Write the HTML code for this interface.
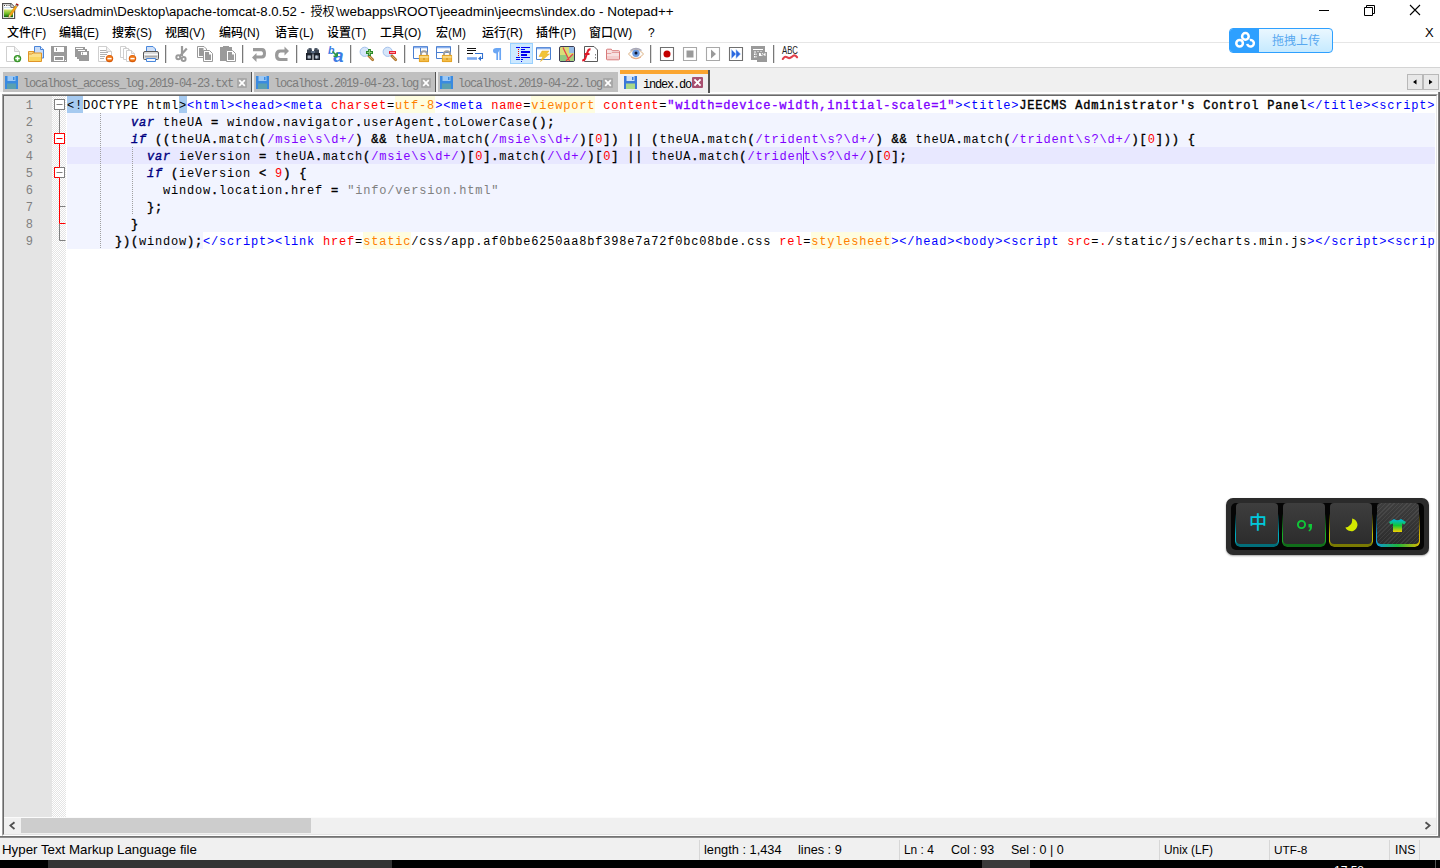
<!DOCTYPE html>
<html lang="zh-CN"><head><meta charset="utf-8"><title>index.do - Notepad++</title>
<style>
*{box-sizing:border-box}
html,body{margin:0;padding:0}
body{width:1440px;height:868px;overflow:hidden;background:#fff;position:relative;font-family:"Liberation Sans","Noto Sans CJK SC",sans-serif;color:#000}
.abs{position:absolute}
#title{left:23px;top:2px;height:20px;line-height:20px;font-size:13.36px;white-space:pre}
.mi{position:absolute;top:24px;height:19px;line-height:19px;font-size:12px;white-space:pre;font-weight:500}
#tbtop{left:0;top:42px;width:1440px;height:1px;background:#e6e6e6}
#tbbot{left:0;top:67px;width:1440px;height:1px;background:#d4d4d4}
#tabarea{left:0;top:68px;width:1440px;height:26px;background:#f0f0f0}
.ic{position:absolute;top:46px;width:16px;height:16px;overflow:visible}
.sep{position:absolute;top:45px;width:1px;height:18px;background:#787878;box-shadow:1px 0 0 rgba(120,120,120,.25)}
.tab{position:absolute;top:72px;height:20px;background:#c0c0c0;border-right:1px solid #555;font-family:"Liberation Mono","Noto Sans CJK SC",monospace;font-size:12px;letter-spacing:-1.2px;color:#7c7c7c;white-space:pre;line-height:20px}
.tab svg{position:absolute;left:2px;top:4px}
.tab .tx{position:absolute;left:20px;top:2px}
.tab .cl{position:absolute;top:6px;width:10px;height:10px}
#edframe{left:2px;top:94px;width:1438px;height:744px;background:#fff}
#ed{left:4px;top:96px;width:1431px;height:721px;background:#fff;overflow:hidden}
#lnm{left:0;top:0;width:48px;height:721px;background:#e4e4e4}
#fm{left:48px;top:0;width:14px;height:721px;background-color:#fff;background-image:linear-gradient(45deg,#e4e4e4 25%,transparent 25%,transparent 75%,#e4e4e4 75%),linear-gradient(45deg,#e4e4e4 25%,transparent 25%,transparent 75%,#e4e4e4 75%);background-size:2px 2px;background-position:0 0,1px 1px}
.ln{position:absolute;left:0;width:29px;text-align:right;height:17px;line-height:21px;font-family:"Liberation Mono",monospace;font-size:12px;color:#808080}
.cl_{position:absolute;left:63px;height:17px;line-height:17px;white-space:pre;font-family:"Liberation Mono",monospace;font-size:12px;letter-spacing:.8px;color:#000}
.cl_ span{display:inline-block;height:17px;vertical-align:top;line-height:21px}
.lbg{position:absolute;left:63px;width:1368px;height:17px;background:#f2f4ff}
.t{color:#0000ff}.a{color:#ff0000}.v{color:#ff8000;background:#fefde0}.s{color:#8000ff;-webkit-text-stroke:.35px #8000ff}
.sg{background:#a6caf0}.b{-webkit-text-stroke:.4px #000}
.j{background:#f2f4ff}.k{color:#000080;-webkit-text-stroke:.4px #000080;font-style:italic}.n{color:#ff0000}.r{color:#8000ff}.q{color:#808080}.o{-webkit-text-stroke:.4px #000}
.ig{position:absolute;width:1px;background-image:linear-gradient(#a0a0a0 50%,transparent 50%);background-size:1px 2px}
#hs{left:4px;top:817px;width:1432px;height:17px;background:#f0f0f0;border-top:1px solid #fbfbfb}
#hsthumb{left:17px;top:0px;width:290px;height:15px;background:#cdcdcd}
#status{left:0;top:838px;width:1440px;height:22px;background:#f0f0f0}
.st{position:absolute;top:840px;height:20px;line-height:20px;font-size:12.5px;white-space:pre}
.sd{position:absolute;top:840px;width:1px;height:20px;background:#d7d7d7}
#task{left:0;top:860px;width:1440px;height:8px;background:#000}
</style></head>
<body>
<svg class="abs" style="left:2px;top:3px" width="17" height="17" viewBox="0 0 17 17"><defs><linearGradient id="ng" x1="0" y1="0" x2="0" y2="1"><stop offset="0" stop-color="#d8e468"/><stop offset=".55" stop-color="#6cbc24"/><stop offset="1" stop-color="#0c5c0c"/></linearGradient></defs><path d="M.6 .6h8.400l3.600 3.600v11.300h-12z" fill="#fff" stroke="#505050" stroke-width="1.200"/><path d="M8.800 .8v3.600h3.600" fill="#f0f0f0" stroke="#505050" stroke-width=".9"/><path d="M2 2.500h1M4.300 2.500h1M6.600 2.500h1" stroke="#444" stroke-width="1.100"/><path d="M2 4.600h6" stroke="#b8d0e8" stroke-width=".8"/><path d="M2 6.500h9v7.700h-9z" fill="url(#ng)"/><path d="M14.300 1.200l1.700 1.200l-7 10.600l-2.300 1.300l.6 -2.500z" fill="#f4a818" stroke="#c87808" stroke-width=".5"/><path d="M7.300 11.800l-.6 2.500l2.300 -1.300z" fill="#f0d8a8"/><path d="M14.600 .2l2.200 1.500l-.9 1.400l-2.200 -1.500z" fill="#9c0c10"/><path d="M13.700 1.600l2.200 1.500l-.5 .8l-2.200 -1.500z" fill="#8aa8c8"/></svg>
<div id="title" class="abs"><span style="font-size:13.15px">C:\Users\admin\Desktop\apache-tomcat-8.0.52 - </span><span style="font-size:12px;margin-left:2px">授权</span><span style="font-size:13.44px;margin-left:1.5px">\webapps\ROOT\jeeadmin\jeecms\index.do - Notepad++</span></div>
<svg class="abs" style="left:1310px;top:0" width="130" height="22" viewBox="0 0 130 22" fill="none" stroke="#000" stroke-width="1"><path d="M9 10.500h10"/><path d="M54.500 7.500h8v8h-8zM56.500 7.500v-2h8v8h-2"/><path d="M100 5l10 10M110 5l-10 10" stroke-width="1.100"/></svg>
<div class="mi" style="left:7px">文件(F)</div><div class="mi" style="left:59px">编辑(E)</div><div class="mi" style="left:112px">搜索(S)</div><div class="mi" style="left:165px">视图(V)</div><div class="mi" style="left:219px">编码(N)</div><div class="mi" style="left:275px">语言(L)</div><div class="mi" style="left:327px">设置(T)</div><div class="mi" style="left:380px">工具(O)</div><div class="mi" style="left:436px">宏(M)</div><div class="mi" style="left:482px">运行(R)</div><div class="mi" style="left:536px">插件(P)</div><div class="mi" style="left:589px">窗口(W)</div><div class="mi" style="left:648px">?</div><div class="mi" style="left:1425px;top:23px;font-size:13px">X</div>
<div id="tbtop" class="abs"></div><div id="tbbot" class="abs"></div>
<svg class="ic" style="left:5px" viewBox="0 0 16 16"><path d="M1.5 0.5h8l5 5v10h-13z" fill="#fff" stroke="#cfcfcf"/><path d="M9.5 0.5v5h5" fill="#f0f0f0" stroke="#cfcfcf"/><circle cx="12.500" cy="12.600" r="3.700" fill="#2e8a20"/><circle cx="12.500" cy="12.600" r="2.900" fill="#4aa838"/><path d="M10.300 12.600h4.400M12.500 10.400v4.400" stroke="#fff" stroke-width="1.500"/></svg><svg class="ic" style="left:28px" viewBox="0 0 16 16"><path d="M6.500 .5h6l3 3v8.500h-9z" fill="#c8dcf8" stroke="#4a84d8"/><path d="M12.500 .5v3h3" fill="#e8f0fc" stroke="#4a84d8"/><path d="M.5 5.500h5.500v3h-5.500z" fill="#f8d880" stroke="#e09428"/><path d="M.5 15.500v-7.500h3l1.500 -1h8.500v8.500z" fill="#fbe08a" stroke="#e09428"/><path d="M1.500 11h11.500v4h-11.500z" fill="#f8d050" opacity=".7"/></svg><svg class="ic" style="left:51px" viewBox="0 0 16 16"><path d="M0 0h16v16h-16z" fill="#9a9a9a"/><path d="M3 1h10v5h-10z" fill="#fff"/><path d="M5 2h1v3h-1z" fill="#9a9a9a"/><path d="M3 10h10v5h-10z" fill="#fff"/><path d="M4 11h8v3h-8z" fill="#9a9a9a"/><path d="M14 14h1v1h-1z" fill="#fff"/></svg><svg class="ic" style="left:74px" viewBox="0 0 16 16"><path d="M1 1h10v10h-10z" fill="#9a9a9a"/><path d="M3 2h6v1h-6z" fill="#fff"/><path d="M2 2h1v1h-1z" fill="#fff"/><path d="M3 3h10v10h-10z" fill="#9a9a9a"/><path d="M5 4h6v1h-6z" fill="#fff"/><path d="M4 4h1v1h-1z" fill="#fff"/><path d="M5 5h10v10h-10z" fill="#9a9a9a"/><path d="M7 6h6v3h-6z" fill="#fff"/><path d="M8 6.500h1v2h-1z" fill="#9a9a9a"/></svg><svg class="ic" style="left:97px" viewBox="0 0 16 16"><path d="M1.5 0.5h8l5 5v10h-13z" fill="#fff" stroke="#cfcfcf"/><path d="M9.5 0.5v5h5" fill="#f0f0f0" stroke="#cfcfcf"/><path d="M3 4.500h6M3 6.500h8M3 8.500h7M3 10.500h5M3 12.500h4" stroke="#b0b0b0"/><circle cx="12.500" cy="12.600" r="3.700" fill="#d85a08"/><circle cx="12.500" cy="12.300" r="2.800" fill="#f07818"/><path d="M10.400 12.600h4.200" stroke="#fff" stroke-width="1.500"/></svg><svg class="ic" style="left:120px" viewBox="0 0 16 16"><path d="M0.5 0.5h5l3 3v8h-8z" fill="#fff" stroke="#cfcfcf"/><path d="M5.5 0.5v3h3" fill="#f0f0f0" stroke="#cfcfcf"/><path d="M3.5 2.5h5l3 3v8h-8z" fill="#fff" stroke="#cfcfcf"/><path d="M8.5 2.5v3h3" fill="#f0f0f0" stroke="#cfcfcf"/><path d="M6.5 4.5h5l3 3v8h-8z" fill="#fff" stroke="#cfcfcf"/><path d="M11.5 4.5v3h3" fill="#f0f0f0" stroke="#cfcfcf"/><circle cx="12.500" cy="12.600" r="3.700" fill="#d85a08"/><circle cx="12.500" cy="12.300" r="2.800" fill="#f07818"/><path d="M10.400 12.600h4.200" stroke="#fff" stroke-width="1.500"/></svg><svg class="ic" style="left:143px" viewBox="0 0 16 16"><path d="M3.500 .5h6.500l2.500 2.500v5h-9z" fill="#cfe0f8" stroke="#4a88dc"/><path d="M2 5.500h12q1.500 0 1.500 1.500v5.500q0 1 -1 1h-13q-1 0 -1 -1v-5.500q0 -1.500 1.500 -1.500z" fill="#d8d8d8" stroke="#5a5a5a"/><path d="M1 8.500h14" stroke="#fafafa" stroke-width="1.400"/><path d="M2 10.500h12" stroke="#a8a8a8" stroke-width="1.600"/><path d="M3.500 12.500h9v3h-9z" fill="#f4f8ff" stroke="#4a88dc"/></svg><div class="sep" style="left:165px"></div><svg class="ic" style="left:174px" viewBox="0 0 16 16"><path d="M8 0v10M12.800 2.500L5.500 10.500" stroke="#9a9a9a" stroke-width="2.200" fill="none"/><circle cx="4.300" cy="11.200" r="2" fill="none" stroke="#9a9a9a" stroke-width="2"/><circle cx="9.600" cy="13" r="2" fill="none" stroke="#9a9a9a" stroke-width="2"/></svg><svg class="ic" style="left:197px" viewBox="0 0 16 16"><path d="M.5 .5h6.500l2.500 2.500v8.500h-9z" fill="#fff" stroke="#9a9a9a"/><path d="M2 2h4.500v2.500h1.500v5.500h-6z" fill="#9a9a9a"/><path d="M6.500 4.500h6l3 3v8h-9z" fill="#fff" stroke="#9a9a9a"/><path d="M8 6h4v2.500h2v5.500h-6z" fill="#9a9a9a"/></svg><svg class="ic" style="left:220px" viewBox="0 0 16 16"><path d="M0 1h12v14h-12z" fill="#9a9a9a"/><path d="M3 0h6v2h-6z" fill="#9a9a9a"/><path d="M6.500 4.500h6l3 3v8h-9z" fill="#fff" stroke="#9a9a9a"/><path d="M8 6h4v2.500h2v5.500h-6z" fill="#9a9a9a"/></svg><div class="sep" style="left:242px"></div><svg class="ic" style="left:251px" viewBox="0 0 16 16"><path d="M2 2h9q4 0 4 5.200t-4 5.300h-5.500v3.500l-4.500 -4.500l4.500 -4.500v2.500h5q1.500 0 1.500 -2t-1.500 -2.300h-8.500z" fill="#9a9a9a"/></svg><svg class="ic" style="left:274px" viewBox="0 0 16 16"><path d="M15 5l-4.500 -4.500v3h-4.500q-5 0 -5 5.700t5 5.800h7.500v-3h-7q-2.200 0 -2.200 -2.700t2.200 -2.800h4v3z" fill="#9a9a9a"/></svg><div class="sep" style="left:296px"></div><svg class="ic" style="left:305px" viewBox="0 0 16 16"><path d="M3.500 2h3v2h-3zM9.500 2h3v2h-3z" fill="#56606e"/><path d="M2 3.500h5v4h-5zM9 3.500h5v4h-5z" fill="#3a4452"/><path d="M6 5h4v3.500h-4z" fill="#5a6a80"/><path d="M1 7h6.500v7h-6.500zM8.500 7h6.500v7h-6.500z" fill="#1c222c"/><path d="M2.500 9.500h3.500v3h-3.500zM10 9.500h3.500v3h-3.500z" fill="#98a4b4"/><path d="M4 9.500v3M11.500 9.500v3" stroke="#d0d8e0" stroke-width=".8"/></svg><svg class="ic" style="left:328px" viewBox="0 0 16 16"><text x="0" y="7.600" font-family="Liberation Sans,sans-serif" font-style="italic" font-weight="bold" font-size="10.500" fill="#3a7ce4">b</text><text x="5.300" y="15.900" font-family="Liberation Sans,sans-serif" font-style="italic" font-weight="bold" font-size="18.500" fill="#3a7ce4">a</text><path d="M4.500 5.500l4 4M9.200 10.200v-3.700M9.200 10.200h-3.700" stroke="#2a9a40" stroke-width="1.600" fill="none"/></svg><div class="sep" style="left:350px"></div><svg class="ic" style="left:359px" viewBox="0 0 16 16"><path d="M9.500 9.500l4.200 4.200" stroke="#b07830" stroke-width="2.800" stroke-linecap="round"/><path d="M10.500 10.500l3 3" stroke="#e0b070" stroke-width="1" stroke-linecap="round"/><circle cx="5.700" cy="5.800" r="4.600" fill="#d6e6fa" stroke="#a4c2ec"/><path d="M7 6.500h7M10.500 3v7" stroke="#2a8a2a" stroke-width="2.800"/><path d="M8 6.500h5M10.500 4v5" stroke="#8cc878" stroke-width="1"/></svg><svg class="ic" style="left:382px" viewBox="0 0 16 16"><path d="M9.500 9.500l4.200 4.200" stroke="#b07830" stroke-width="2.800" stroke-linecap="round"/><path d="M10.500 10.500l3 3" stroke="#e0b070" stroke-width="1" stroke-linecap="round"/><circle cx="5.700" cy="5.800" r="4.600" fill="#d6e6fa" stroke="#a4c2ec"/><path d="M7 6.500h7" stroke="#e8182a" stroke-width="2.900"/><path d="M8 6.500h5" stroke="#ffb0b0" stroke-width=".9"/></svg><div class="sep" style="left:404px"></div><svg class="ic" style="left:413px" viewBox="0 0 16 16"><path d="M.5 .5h14v12h-14z" fill="#fff" stroke="#4a7fd0"/><path d="M1 1.500h13" stroke="#8ab0ec" stroke-width="1.600"/><path d="M7.500 2v10" stroke="#4a7fd0"/><path d="M8 9.500v-1.500q0 -2.800 3 -2.800t3 2.800v1.500" fill="none" stroke="#a0a0a0" stroke-width="1.900"/><path d="M6 9h10v7h-10z" fill="#f2bc48"/><path d="M6.400 9.400h9.200v6.200h-9.200z" fill="none" stroke="#e09a18" stroke-width=".8"/><path d="M6.500 11h9" stroke="#fce9a8" stroke-width="1.200"/><path d="M10.500 12h1v2h-1z" fill="#c88a10"/></svg><svg class="ic" style="left:436px" viewBox="0 0 16 16"><path d="M.5 .5h14v12h-14z" fill="#fff" stroke="#4a7fd0"/><path d="M1 1.500h13" stroke="#8ab0ec" stroke-width="1.600"/><path d="M1 6.500h13" stroke="#4a7fd0"/><path d="M8 9.500v-1.500q0 -2.800 3 -2.800t3 2.800v1.500" fill="none" stroke="#a0a0a0" stroke-width="1.900"/><path d="M6 9h10v7h-10z" fill="#f2bc48"/><path d="M6.400 9.400h9.200v6.200h-9.200z" fill="none" stroke="#e09a18" stroke-width=".8"/><path d="M6.500 11h9" stroke="#fce9a8" stroke-width="1.200"/><path d="M10.500 12h1v2h-1z" fill="#c88a10"/></svg><div class="sep" style="left:458px"></div><svg class="ic" style="left:467px" viewBox="0 0 16 16"><path d="M0 2.500h9M0 4.500h9M0 7.500h6" stroke="#111" stroke-width="1"/><path d="M8 7.500h7.500v5h-3" fill="none" stroke="#3070d0" stroke-width="1.100"/><path d="M11 12.500l3 -2.500v5z" fill="#3070d0"/><path d="M0 12.500h10" stroke="#78a8f0" stroke-width="2.600"/></svg><svg class="ic" style="left:490px" viewBox="0 0 16 16"><path d="M7.200 2v12M10.200 2v12" stroke="#6aa6f4" stroke-width="1.700" fill="none"/><path d="M11 2h-4.500q-3.500 0 -3.500 2.800t3.500 2.700h1z" fill="#6aa6f4"/></svg><div class="abs" style="left:510px;top:43px;width:23px;height:21px;background:#cce8ff;border:1px solid #99d1ff"></div><svg class="ic" style="left:513px" viewBox="0 0 16 16"><path d="M3 1.500h4M8 1.500h9M8 3.500h4M3 11.500h4M8 11.500h9M3 13.500h4M8 13.500h2M8 15.500h1" stroke="#0000f0" stroke-width="1"/><path d="M8 6h9M8 9h6" stroke="#0000f0" stroke-width="2"/><path d="M5 3.500h1M5 5.500h1M5 7.500h1M5 9.500h1" stroke="#f00000" stroke-width="1.200"/></svg><svg class="ic" style="left:536px" viewBox="0 0 16 16"><path d="M.5 1.500h14v12h-14z" fill="#fff" stroke="#4a7fd0"/><path d="M1 2.500h13" stroke="#8ab0ec" stroke-width="1.600"/><path d="M6 5h7l-2.500 3h3l-9 7.500l2.500 -5h-4z" fill="#f2c438" stroke="#e0a828" stroke-width=".5"/></svg><svg class="ic" style="left:559px" viewBox="0 0 16 16"><rect x=".5" y=".5" width="15" height="15" rx="1.500" fill="#d8de78" stroke="#3c3c54"/><path d="M1 9h7v6h-7z" fill="#90c880"/><path d="M10 1h5v6h-5z" fill="#98bce8"/><path d="M11 9h4v6h-4z" fill="#a8d080"/><path d="M4 1.500l6.500 13.500M14 8l-7 7" stroke="#e8404a" stroke-width="1.300"/></svg><svg class="ic" style="left:582px" viewBox="0 0 16 16"><path d="M2.500 .5h9.500l3.500 3.500v11.500h-13z" fill="#fff" stroke="#5a5a5a"/><path d="M13.500 8v5.500" stroke="#808080" stroke-dasharray="1.500 1.500"/><path d="M8.500 3.500q-2 -.5 -2.800 2l-2.500 7q-.8 2 -3 2M2.500 8h5" fill="none" stroke="#e01828" stroke-width="2.100"/></svg><svg class="ic" style="left:605px" viewBox="0 0 16 16"><path d="M1.500 4q0 -.8 .8 -.8h4l1 1.500h6.400q.8 0 .8 .8v7.500q0 .8 -.8 .8h-11.400q-.8 0 -.8 -.8z" fill="#f8e0e0" stroke="#d87878"/><path d="M2 7.500h4l1 -1h7" fill="none" stroke="#e4a0a0"/><path d="M2 10h12v3h-12z" fill="#f0c0c0" opacity=".6"/></svg><svg class="ic" style="left:628px" viewBox="0 0 16 16"><path d="M.5 8q7.500 -9 15 0q-7.500 8.500 -15 0z" fill="#fbfbfb" stroke="#e4c4a0" stroke-width="1.100"/><circle cx="8" cy="7.300" r="3.700" fill="#6a9ae0"/><circle cx="8" cy="7" r="1.500" fill="#101830"/><path d="M2.500 4.500q5.500 -4 11 0" fill="none" stroke="#a8a8b8" stroke-width="1.300"/><path d="M3 11q5 3.500 10 0" fill="none" stroke="#e8a880" stroke-width="1"/></svg><div class="sep" style="left:650px"></div><svg class="ic" style="left:659px" viewBox="0 0 16 16"><path d="M1.500 1.500h13v13h-13z" fill="#fff" stroke="#707070" stroke-width="1.100"/><circle cx="8" cy="8" r="3.500" fill="#c40000"/></svg><svg class="ic" style="left:682px" viewBox="0 0 16 16"><path d="M1.500 1.500h13v13h-13z" fill="#fff" stroke="#a8a8a8" stroke-width="1.100"/><path d="M4.500 4.500h7v7h-7z" fill="#9a9a9a"/></svg><svg class="ic" style="left:705px" viewBox="0 0 16 16"><path d="M1.500 1.500h13v13h-13z" fill="#fff" stroke="#a8a8a8" stroke-width="1.100"/><path d="M6 3.500l5 4.500l-5 4.500z" fill="#9a9a9a"/></svg><svg class="ic" style="left:728px" viewBox="0 0 16 16"><path d="M1.500 1.500h13v13h-13z" fill="#fff" stroke="#707070" stroke-width="1.100"/><path d="M3.500 3.500l4.500 4.500l-4.500 4.500zM8 3.500l4.500 4.500l-4.500 4.500z" fill="#2a68e0" stroke="#9cc0f4" stroke-width=".5"/></svg><svg class="ic" style="left:751px" viewBox="0 0 16 16"><path d="M0 0h14v14h-14z" fill="#9a9a9a"/><path d="M2 3h10v1h-10z" fill="#fff"/><path d="M3 5.500h2v1h-2zM6 5.500h2v1h-2zM9 5.500h2v1h-2zM3 7.500h1.500v1.500h-1.500zM5.500 7.500h1v1.500h-1zM3 10h1.500v1.500h-1.500zM5.500 10h1v1.500h-1z" fill="#fff"/><path d="M6 6h10v10h-10z" fill="#9a9a9a"/><path d="M8 7h6.500v3h-6.500z" fill="#fff"/><path d="M9.500 7h1v2h1.500M13.500 7.500h-1.500v2h1.500" stroke="#9a9a9a" fill="none" stroke-width=".9"/></svg><div class="sep" style="left:773px"></div><svg class="ic" style="left:782px" viewBox="0 0 16 16"><text x="8" y="7.600" text-anchor="middle" font-family="Liberation Sans,sans-serif" font-size="10.600" fill="#222" textLength="16" lengthAdjust="spacingAndGlyphs">ABC</text><path d="M.8 13q2 -3.200 4 -1.800t3.500 .6t3 -2t3.800 1.500" fill="none" stroke="#e0404a" stroke-width="2.100" stroke-linecap="round"/></svg>
<div class="abs" style="left:1229px;top:28px;width:104px;height:25px;border:1px solid #2ea0ff;border-radius:4px;background:linear-gradient(#eaf7ff,#c6eaff);overflow:hidden"><div class="abs" style="left:0;top:0;width:29px;height:23px;background:#2ea0ff"></div><svg class="abs" style="left:4px;top:2px" width="22" height="19" viewBox="0 0 22 19" fill="none" stroke="#fff" stroke-width="2.500"><circle cx="11.400" cy="5.400" r="3.300"/><circle cx="5.600" cy="12.300" r="3.300"/><path d="M15.800 9.100A3.300 3.300 0 1 1 13.300 12.900"/></svg><div class="abs" style="left:42px;top:1px;height:23px;line-height:23px;font-size:12px;color:#58a8f0;white-space:pre">拖拽上传</div></div>
<div id="tabarea" class="abs"></div>
<div class="tab" style="left:3px;width:249px"><svg width="13" height="13" viewBox="0 0 13 13"><path d="M0 0h13v13h-13z" fill="#3a8ae0"/><path d="M2.500 0h8v5h-8z" fill="#9cc8f4"/><path d="M8 1h1.500v3h-1.500z" fill="#3a8ae0"/><path d="M2 7.500h9v5.500h-9z" fill="#5aa0b0"/></svg><span class="tx">localhost_access_log.2019-04-23.txt</span><svg class="cl" style="left:234px" viewBox="0 0 10 10"><rect width="10" height="10" rx="1" fill="#a8a8a8"/><path d="M2.200 2.200l5.600 5.600M7.800 2.200l-5.600 5.600" stroke="#fff" stroke-width="1.700"/></svg></div><div class="tab" style="left:254px;width:182px"><svg width="13" height="13" viewBox="0 0 13 13"><path d="M0 0h13v13h-13z" fill="#3a8ae0"/><path d="M2.500 0h8v5h-8z" fill="#9cc8f4"/><path d="M8 1h1.500v3h-1.500z" fill="#3a8ae0"/><path d="M2 7.500h9v5.500h-9z" fill="#5aa0b0"/></svg><span class="tx">localhost.2019-04-23.log</span><svg class="cl" style="left:167px" viewBox="0 0 10 10"><rect width="10" height="10" rx="1" fill="#a8a8a8"/><path d="M2.200 2.200l5.600 5.600M7.800 2.200l-5.600 5.600" stroke="#fff" stroke-width="1.700"/></svg></div><div class="tab" style="left:438px;width:180px;border-right:0"><svg width="13" height="13" viewBox="0 0 13 13"><path d="M0 0h13v13h-13z" fill="#3a8ae0"/><path d="M2.500 0h8v5h-8z" fill="#9cc8f4"/><path d="M8 1h1.500v3h-1.500z" fill="#3a8ae0"/><path d="M2 7.500h9v5.500h-9z" fill="#5aa0b0"/></svg><span class="tx">localhost.2019-04-22.log</span><svg class="cl" style="left:165px" viewBox="0 0 10 10"><rect width="10" height="10" rx="1" fill="#a8a8a8"/><path d="M2.200 2.200l5.600 5.600M7.800 2.200l-5.600 5.600" stroke="#fff" stroke-width="1.700"/></svg></div><div class="tab" style="left:620px;top:70px;width:90px;height:23px;background:#f0f0f0;color:#000;border-right:2px solid #555;z-index:5"><div class="abs" style="left:0;top:0;width:88px;height:4px;background:#faa530"></div><svg style="top:6px;left:4px" width="13" height="13" viewBox="0 0 13 13"><path d="M0 0h13v13h-13z" fill="#3a78d8"/><path d="M2.500 0h8v5h-8z" fill="#cfe2f8"/><path d="M8 1h1.500v3h-1.500z" fill="#3a78d8"/><path d="M2 7.500h9v5.500h-9z" fill="#a8d888"/></svg><span class="tx" style="left:23px;top:5px">index.do</span><svg class="cl" style="left:72px;top:7px;width:11px;height:11px" viewBox="0 0 10 10"><rect width="10" height="10" rx="1" fill="#a85070"/><path d="M2.200 2.200l5.600 5.600M7.800 2.200l-5.600 5.600" stroke="#fff" stroke-width="1.700"/></svg></div>
<div class="abs" style="left:1407px;top:74px;width:16px;height:16px;background:#e8e8e8;border:1px solid #b8b8b8"></div><div class="abs" style="left:1423px;top:74px;width:16px;height:16px;background:#e8e8e8;border:1px solid #b8b8b8"></div><svg class="abs" style="left:1407px;top:74px" width="32" height="16" viewBox="0 0 32 16"><path d="M9.500 5.500v5l-3.500 -2.500zM22 5.500v5l3.500 -2.500z" fill="#000"/></svg>
<div class="abs" style="left:0;top:92px;width:1440px;height:2px;background:#fdfdfd"></div><div class="abs" style="left:2px;top:94px;width:1436px;height:742px;background:#fff;border-left:1px solid #a0a0a0;border-top:1px solid #a0a0a0;border-right:1px solid #fff;border-bottom:1px solid #fff"></div><div class="abs" style="left:3px;top:95px;width:1434px;height:740px;background:#fff;border-left:1px solid #696969;border-top:1px solid #696969;border-right:1px solid #e3e3e3;border-bottom:1px solid #e3e3e3"></div><div class="abs" style="left:1438px;top:92px;width:2px;height:746px;background:linear-gradient(90deg,#8a8a8a,#5a5a5a)"></div><div class="abs" style="left:0;top:836px;width:1440px;height:2px;background:linear-gradient(#666,#9a9a9a)"></div>
<div id="ed" class="abs"><div id="lnm" class="abs"></div><div id="fm" class="abs"></div>
<div class="ln" style="top:0px">1</div><div class="cl_" style="top:0px"><span class="sg">&lt;!</span><span class="">DOCTYPE html</span><span class="sg">&gt;</span><span class="t">&lt;html&gt;&lt;head&gt;&lt;meta </span><span class="a">charset</span><span class="">=</span><span class="v">utf-8</span><span class="t">&gt;&lt;meta </span><span class="a">name</span><span class="">=</span><span class="v">viewport</span><span class=""> </span><span class="a">content</span><span class="">=</span><span class="s">"width=device-width,initial-scale=1"</span><span class="t">&gt;&lt;title&gt;</span><span class="b">JEECMS Administrator's Control Panel</span><span class="t">&lt;/title&gt;&lt;script&gt;</span></div>
<div class="lbg" style="top:17px;background:#f2f4ff"></div><div class="ln" style="top:17px">2</div><div class="cl_" style="top:17px"><span class="">        </span><span class="k">var</span><span class=""> theUA </span><span class="o">=</span><span class=""> window</span><span class="o">.</span><span class="">navigator</span><span class="o">.</span><span class="">userAgent</span><span class="o">.</span><span class="">toLowerCase</span><span class="o">();</span></div>
<div class="lbg" style="top:34px;background:#f2f4ff"></div><div class="ln" style="top:34px">3</div><div class="cl_" style="top:34px"><span class="">        </span><span class="k">if</span><span class=""> </span><span class="o">((</span><span class="">theUA</span><span class="o">.</span><span class="">match</span><span class="o">(</span><span class="r">/msie\s\d+/</span><span class="o">)</span><span class=""> </span><span class="o">&amp;&amp;</span><span class=""> theUA</span><span class="o">.</span><span class="">match</span><span class="o">(</span><span class="r">/msie\s\d+/</span><span class="o">)[</span><span class="n">0</span><span class="o">])</span><span class=""> </span><span class="o">||</span><span class=""> </span><span class="o">(</span><span class="">theUA</span><span class="o">.</span><span class="">match</span><span class="o">(</span><span class="r">/trident\s?\d+/</span><span class="o">)</span><span class=""> </span><span class="o">&amp;&amp;</span><span class=""> theUA</span><span class="o">.</span><span class="">match</span><span class="o">(</span><span class="r">/trident\s?\d+/</span><span class="o">)[</span><span class="n">0</span><span class="o">]))</span><span class=""> </span><span class="o">{</span></div>
<div class="lbg" style="top:51px;background:#e8e8ff"></div><div class="ln" style="top:51px">4</div><div class="cl_" style="top:51px"><span class="">          </span><span class="k">var</span><span class=""> ieVersion </span><span class="o">=</span><span class=""> theUA</span><span class="o">.</span><span class="">match</span><span class="o">(</span><span class="r">/msie\s\d+/</span><span class="o">)[</span><span class="n">0</span><span class="o">].</span><span class="">match</span><span class="o">(</span><span class="r">/\d+/</span><span class="o">)[</span><span class="n">0</span><span class="o">]</span><span class=""> </span><span class="o">||</span><span class=""> theUA</span><span class="o">.</span><span class="">match</span><span class="o">(</span><span class="r">/trident\s?\d+/</span><span class="o">)[</span><span class="n">0</span><span class="o">];</span></div>
<div class="lbg" style="top:68px;background:#f2f4ff"></div><div class="ln" style="top:68px">5</div><div class="cl_" style="top:68px"><span class="">          </span><span class="k">if</span><span class=""> </span><span class="o">(</span><span class="">ieVersion </span><span class="o">&lt;</span><span class=""> </span><span class="n">9</span><span class="o">)</span><span class=""> </span><span class="o">{</span></div>
<div class="lbg" style="top:85px;background:#f2f4ff"></div><div class="ln" style="top:85px">6</div><div class="cl_" style="top:85px"><span class="">            </span><span class="">window</span><span class="o">.</span><span class="">location</span><span class="o">.</span><span class="">href </span><span class="o">=</span><span class=""> </span><span class="q">"info/version.html"</span></div>
<div class="lbg" style="top:102px;background:#f2f4ff"></div><div class="ln" style="top:102px">7</div><div class="cl_" style="top:102px"><span class="">          </span><span class="o">};</span></div>
<div class="lbg" style="top:119px;background:#f2f4ff"></div><div class="ln" style="top:119px">8</div><div class="cl_" style="top:119px"><span class="">        </span><span class="o">}</span></div>
<div class="lbg" style="top:136px;background:#f2f4ff"></div><div class="ln" style="top:136px">9</div><div class="cl_" style="top:136px"><span class="">      </span><span class="o">})(</span><span class="">window</span><span class="o">);</span><span style="background:#fff;display:inline-block;height:17px"><span class="t">&lt;/script&gt;&lt;link </span><span class="a">href</span><span class="">=</span><span class="v">static</span><span class="">/css/app.af0bbe6250aa8bf398e7a72f0bc08bde.css </span><span class="a">rel</span><span class="">=</span><span class="v">stylesheet</span><span class="t">&gt;&lt;/head&gt;&lt;body&gt;&lt;script </span><span class="a">src</span><span class="">=</span><span class="a">.</span><span class="">/static/js/echarts.min.js</span><span class="t">&gt;&lt;/script&gt;&lt;scrip</span></span></div>
<div class="ig" style="left:96px;top:17px;height:136px"></div><div class="ig" style="left:128px;top:51px;height:68px"></div><div class="abs" style="left:799px;top:51px;width:1px;height:17px;background:#8000ff"></div><svg class="abs" style="left:48px;top:0" width="15" height="160" viewBox="0 0 15 160" fill="none"><path d="M7.500 13v25M7.500 128v16.500h6M8 110.500h5.500" stroke="#808080"/><path d="M7.500 47v25M7.500 81v46.500h6" stroke="#ff0000"/><rect x="2.500" y="3.500" width="10" height="10" fill="#fff" stroke="#808080"/><path d="M4.500 8.500h6" stroke="#808080"/><rect x="2.500" y="37.500" width="10" height="10" fill="#fff" stroke="#ff0000"/><path d="M4.500 42.500h6" stroke="#ff0000"/><rect x="2.500" y="71.500" width="10" height="10" fill="#fff" stroke="#808080"/><path d="M4.500 76.500h6" stroke="#808080"/><path d="M7.500 71.500h-5v10h5" stroke="#ff0000"/></svg></div>
<div id="hs" class="abs"><div id="hsthumb" class="abs"></div><svg class="abs" style="left:0;top:0" width="17" height="17" viewBox="0 0 17 17"><path d="M10.500 4.200L6.400 7.600L10.500 11" fill="none" stroke="#505050" stroke-width="1.800"/></svg><svg class="abs" style="left:1415px;top:0" width="17" height="17" viewBox="0 0 17 17"><path d="M6.500 4.200L10.600 7.600L6.500 11" fill="none" stroke="#505050" stroke-width="1.800"/></svg></div>
<div id="status" class="abs"></div><div class="st" style="left:2px;font-size:13.3px">Hyper Text Markup Language file</div><div class="st" style="left:704px;font-size:12.8px">length : 1,434</div><div class="st" style="left:798px;font-size:12.7px">lines : 9</div><div class="st" style="left:904px;font-size:11.9px">Ln : 4</div><div class="st" style="left:951px;font-size:12.5px">Col : 93</div><div class="st" style="left:1011px;font-size:12.5px">Sel : 0 | 0</div><div class="st" style="left:1164px;font-size:11.9px">Unix (LF)</div><div class="st" style="left:1274px;font-size:11.8px">UTF-8</div><div class="st" style="left:1395px;font-size:12.2px">INS</div><div class="sd" style="left:699px"></div><div class="sd" style="left:899px"></div><div class="sd" style="left:1159px"></div><div class="sd" style="left:1269px"></div><div class="sd" style="left:1389px"></div><div class="sd" style="left:1419px"></div>
<div id="task" class="abs"><div class="abs" style="left:48px;top:0;width:344px;height:8px;background:#333"></div><div class="abs" style="left:982px;top:0;width:48px;height:8px;background:#3a3a3a"></div><div class="abs" style="left:1435px;top:0;width:1px;height:8px;background:#555"></div><div class="abs" style="left:1334px;top:5px;font-size:12px;line-height:12px;color:#fff;white-space:pre">17:58</div></div>
<div class="abs" style="left:1226px;top:498px;width:203px;height:57px;border-radius:7px;background:#2b2b2b;box-shadow:0 1px 2px rgba(0,0,0,.35)"><div class="abs" style="left:5px;top:5px;width:193px;height:47px;border-radius:5px;background:#050505"></div><div class="abs" style="left:9px;top:12px;width:44px;height:37px;border-radius:5px;background:linear-gradient(90deg,#00b4c8,#00b4c8);-webkit-mask-image:linear-gradient(transparent 8%,rgba(0,0,0,.95) 65%,rgba(0,0,0,.95) 84%,rgba(0,0,0,.6) 92%);mask-image:linear-gradient(transparent 8%,rgba(0,0,0,.95) 65%,rgba(0,0,0,.95) 84%,rgba(0,0,0,.6) 92%)"></div><div class="abs" style="left:10px;top:5px;width:42px;height:41px;border-radius:4px;background:linear-gradient(#3e3e3e,#2c2c2c)"></div><div class="abs" style="left:56px;top:12px;width:44px;height:37px;border-radius:5px;background:linear-gradient(90deg,#18b428,#18b428);-webkit-mask-image:linear-gradient(transparent 8%,rgba(0,0,0,.95) 65%,rgba(0,0,0,.95) 84%,rgba(0,0,0,.6) 92%);mask-image:linear-gradient(transparent 8%,rgba(0,0,0,.95) 65%,rgba(0,0,0,.95) 84%,rgba(0,0,0,.6) 92%)"></div><div class="abs" style="left:57px;top:5px;width:42px;height:41px;border-radius:4px;background:linear-gradient(#3e3e3e,#2c2c2c)"></div><div class="abs" style="left:103px;top:12px;width:44px;height:37px;border-radius:5px;background:linear-gradient(90deg,#c8c800,#c8c800);-webkit-mask-image:linear-gradient(transparent 8%,rgba(0,0,0,.95) 65%,rgba(0,0,0,.95) 84%,rgba(0,0,0,.6) 92%);mask-image:linear-gradient(transparent 8%,rgba(0,0,0,.95) 65%,rgba(0,0,0,.95) 84%,rgba(0,0,0,.6) 92%)"></div><div class="abs" style="left:104px;top:5px;width:42px;height:41px;border-radius:4px;background:linear-gradient(#3e3e3e,#2c2c2c)"></div><div class="abs" style="left:150px;top:12px;width:44px;height:37px;border-radius:5px;background:linear-gradient(90deg,#10a0e0,#20c040 50%,#e8c000);-webkit-mask-image:linear-gradient(transparent 8%,rgba(0,0,0,.95) 65%);mask-image:linear-gradient(transparent 8%,rgba(0,0,0,.95) 65%)"></div><div class="abs" style="left:151px;top:5px;width:42px;height:41px;border-radius:4px;background:repeating-linear-gradient(135deg,rgba(255,255,255,.07) 0 1px,transparent 1px 3px),linear-gradient(#3e3e3e,#2c2c2c)"></div><div class="abs" style="left:22px;top:14px;width:20px;height:22px;line-height:22px;font-size:18px;font-weight:500;color:#00c8dc;font-family:'Liberation Sans','Noto Sans CJK SC',sans-serif;text-align:center">中</div><svg class="abs" style="left:68px;top:20px" width="22" height="16" viewBox="0 0 22 16"><circle cx="7.500" cy="6.500" r="3.600" fill="none" stroke="#10c838" stroke-width="1.900"/><path d="M14.500 6h3.500v3q0 3 -3 4.500l-.5 -1q1.500 -1 1.500 -3h-1.500z" fill="#10c838"/></svg><svg class="abs" style="left:119px;top:20px" width="13" height="14" viewBox="0 0 13 14"><path d="M7 .6a6.300 6.300 0 1 1 -6.600 8.800a7.400 7.400 0 0 0 6.600 -8.800z" fill="#d4e800"/></svg><svg class="abs" style="left:163px;top:21px" width="17" height="13" viewBox="0 0 17 13"><defs><linearGradient id="ts" x1="0" y1="0" x2="0" y2="1"><stop offset="0" stop-color="#00b8e8"/><stop offset=".5" stop-color="#10c838"/><stop offset="1" stop-color="#f8d000"/></linearGradient></defs><path d="M5 0q3.500 2.500 7 0l5 3l-1.500 2.500l-2.500 -1v8.500h-9v-8.500l-2.500 1l-1.500 -2.500z" fill="url(#ts)"/></svg></div>
</body></html>
